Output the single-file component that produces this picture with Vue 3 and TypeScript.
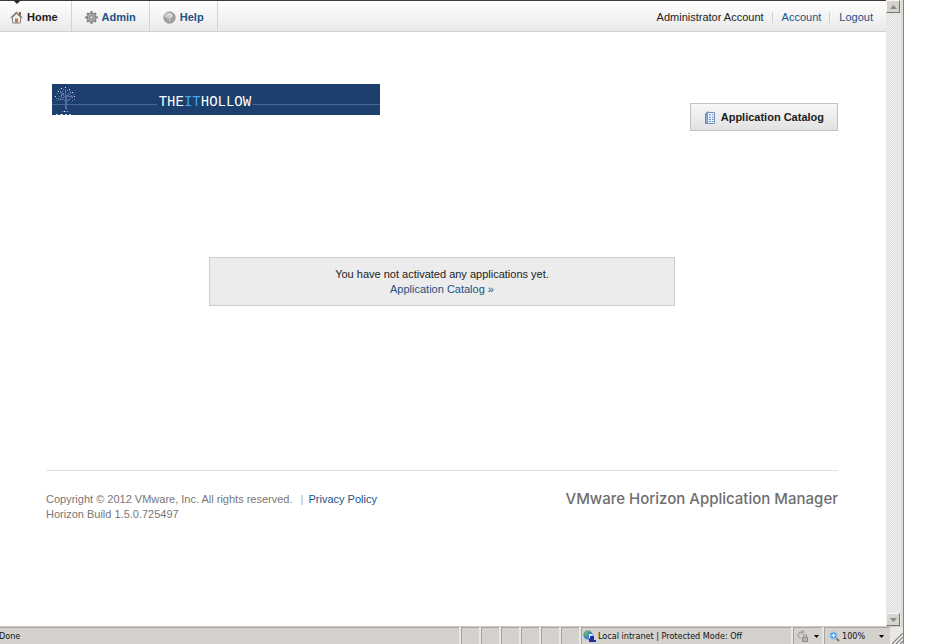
<script setup lang="ts">
interface NavItem {
  id: string
  label: string
  active: boolean
}

const navItems: NavItem[] = [
  { id: 'home', label: 'Home', active: true },
  { id: 'admin', label: 'Admin', active: false },
  { id: 'help', label: 'Help', active: false },
]

const emptyPanes: number[] = [1, 2, 3, 4, 5, 6]
const gearTeeth: number[] = [0, 45, 90, 135, 180, 225, 270, 315]

// Light pixels of the tree in the banner: [x, y]
const treeStars: [number, number][] = [
  [9, 4], [13, 3], [17, 5], [6, 7], [20, 8], [3, 12], [22, 12], [12, 27],
]
const treeLeaves: [number, number][] = [
  [7, 5], [11, 5], [15, 6], [18, 8], [5, 9], [8, 8], [21, 10], [4, 14], [7, 12], [9, 11], [18, 12],
  [20, 13], [16, 9], [13, 7], [6, 14], [22, 15], [8, 15], [17, 15], [10, 7], [15, 11], [11, 13],
  [5, 16], [20, 16], [11, 9],
]
</script>

<template>
  <div class="window">
    <div class="viewport">
      <div class="page">
        <header class="topbar">
          <nav class="nav" aria-label="Main">
            <a
              v-for="item in navItems"
              :key="item.id"
              href="#"
              class="nav-item"
              :class="{ active: item.active }"
            >
              <svg v-if="item.id === 'home'" class="icon" viewBox="0 0 13 13" aria-hidden="true">
                <path d="M9 1h2v4H9z" fill="#a0604a" />
                <path d="M2.5 6.5L6.5 2.5l4 4v5.5h-8z" fill="#f1efed" stroke="#8b8683" />
                <path d="M.8 7L6.5 1.3 12.2 7" fill="none" stroke="#8d8782" stroke-width="1.4" />
                <path d="M5 7.5h3V12H5z" fill="#b77b58" />
              </svg>
              <svg v-else-if="item.id === 'admin'" class="icon" viewBox="0 0 13 13" aria-hidden="true">
                <path
                  v-for="angle in gearTeeth"
                  :key="angle"
                  d="M5.300 .2h2.400v3h-2.400z"
                  fill="#858585"
                  :transform="`rotate(${angle} 6.5 6.5)`"
                />
                <circle cx="6.5" cy="6.5" r="4.2" fill="#b4b4b4" stroke="#7d7d7d" />
                <circle cx="6.5" cy="6.5" r="1.8" fill="#e2e2e2" stroke="#696969" />
              </svg>
              <svg v-else class="icon" viewBox="0 0 13 13" aria-hidden="true">
                <circle cx="6.5" cy="6.5" r="5.6" fill="#a3a3a3" stroke="#8b8b8b" />
                <ellipse cx="5.5" cy="4.5" rx="4" ry="3" fill="#c9c9c9" />
                <path
                  d="M4.8 5c0-2.3 3.7-2.2 3.7 0 0 1.4-1.8 1.3-1.8 2.7M6.7 9v1.2"
                  fill="none"
                  stroke="#f2f2f2"
                />
              </svg>
              <span>{{ item.label }}</span>
            </a>
          </nav>
          <div class="account">
            <span>Administrator Account</span>
            <a href="#">Account</a>
            <a href="#">Logout</a>
          </div>
        </header>

        <main class="content">
          <div class="heading">
            <div class="banner">
              <svg class="tree" viewBox="0 0 26 31" aria-hidden="true" shape-rendering="crispEdges">
                <path
                  d="M13 5v20M14 11v15M13 17l-4-4v-4M13 13l-5-6M14 14l4-4V7M14 18l5-4v-3M10 27h7M12 15H6M15 12h6"
                  fill="none"
                  stroke="#5569a3"
                />
                <path d="M4 30h2M8 30h3M13 30h2M17 30h2" stroke="#c6cee4" />
                <rect v-for="[x, y] in treeLeaves" :key="`l${x}-${y}`" :x="x" :y="y" width="1" height="1" fill="#7383b4" />
                <rect v-for="[x, y] in treeStars" :key="`s${x}-${y}`" :x="x" :y="y" width="1" height="1" fill="#dfe8f8" />
              </svg>
              <span class="rule rule-left"></span>
              <span class="banner-name">THE<em>IT</em>HOLLOW</span>
              <span class="rule rule-right"></span>
            </div>
            <button type="button" class="catalog">
              <svg class="catalog-icon" viewBox="0 0 12 13" aria-hidden="true">
                <path d="M1.5 2.5l3-1.8v11.8h-3z" fill="#8eabd5" stroke="#6886b5" />
                <path d="M3.5 1.5h7v11h-7z" fill="#eef4fc" stroke="#7592bf" />
                <path d="M5 4h2M8 4h1.5M5 6.5h2M8 6.5h1.5M5 8.5h2M8 8.5h1.5M5 10.5h2M8 10.5h1.5" stroke="#6689bd" />
              </svg>
              <span>Application Catalog</span>
            </button>
          </div>

          <section class="empty">
            <p>You have not activated any applications yet.</p>
            <a href="#">Application Catalog »</a>
          </section>

          <footer class="footer">
            <div class="legal">
              <p>
                Copyright © 2012 VMware, Inc. All rights reserved.
                <span class="bar">|</span>
                <a href="#">Privacy Policy</a>
              </p>
              <p>Horizon Build 1.5.0.725497</p>
            </div>
            <div class="product">VMware Horizon Application Manager</div>
          </footer>
        </main>
      </div>

      <div class="scrollbar">
        <button type="button" class="scroll-button" aria-label="Scroll up">
          <svg viewBox="0 0 7 4" aria-hidden="true"><path d="M0 4l3.5-4L7 4z" fill="#888" /></svg>
        </button>
        <button type="button" class="scroll-button" aria-label="Scroll down">
          <svg viewBox="0 0 7 4" aria-hidden="true"><path d="M0 0l3.5 4L7 0z" fill="#888" /></svg>
        </button>
      </div>
    </div>

    <div class="statusbar">
      <span class="pane done">Done</span>
      <span v-for="pane in emptyPanes" :key="pane" class="pane small"></span>
      <span class="pane zone">
        <svg class="zone-icon" viewBox="0 0 13 12" aria-hidden="true">
          <circle cx="5" cy="5" r="4.6" fill="#3c86c8" />
          <path d="M2 2c2-2 4-1 4 0S4 3 4.500 5 2 6 1 4z" fill="#68b75c" />
          <path d="M6 4h3v4H6z" fill="#d4ecfa" />
          <path d="M7 6h4v4h2v2H6V9h1z" fill="#1f2fa4" />
        </svg>
        Local intranet | Protected Mode: Off
      </span>
      <button type="button" class="pane privacy" aria-label="Privacy settings">
        <svg class="lock-icon" viewBox="0 0 12 12" aria-hidden="true">
          <path d="M1 6c0-3 2-4 5-4M4 0l3 2-3 2M1 6l3 3" fill="none" stroke="#aaa" stroke-width="1.300" />
          <path d="M5.500 7.500h5v4h-5z" fill="#b8b8b8" stroke="#888" />
          <path d="M6.500 7V5.500q1.500-2 3 0V7" fill="none" stroke="#888" />
        </svg>
        <svg class="caret" viewBox="0 0 5 3" aria-hidden="true"><path d="M0 0h5L2.500 3z" /></svg>
      </button>
      <button type="button" class="pane zoom">
        <svg class="zoom-icon" viewBox="0 0 11 11" aria-hidden="true">
          <path d="M6.500 6.500l3.500 3.500" stroke="#9b6b46" stroke-width="2" />
          <circle cx="4.500" cy="4.500" r="3.700" fill="#4b9ee8" stroke="#a6cdef" />
          <path d="M4.500 2.500v4M2.500 4.500h4" stroke="#fff" stroke-width="1.200" />
        </svg>
        <span>100%</span>
        <svg class="caret" viewBox="0 0 5 3" aria-hidden="true"><path d="M0 0h5L2.500 3z" /></svg>
      </button>
      <svg class="grip" viewBox="0 0 11 11" aria-hidden="true">
        <path d="M0 11L11 0M4 11l7-7M8 11l3-3" stroke="#8c8a84" stroke-width="1.300" />
        <path d="M2 11l9-9M6 11l5-5" stroke="#fff" />
      </svg>
    </div>
  </div>
</template>

<style>
body {
  background: #fff;
}
</style>

<style scoped>
.window {
  display: flex;
  flex-direction: column;
  min-height: 100vh;
  box-sizing: border-box;
  margin-right: 32px;
  border-right: 1px solid #858585;
  font-family: "Liberation Sans", Arial, sans-serif;
  font-size: 11px;
  line-height: 15px;
  color: #222;
  overflow: hidden;
}

a {
  color: #1c5285;
  text-decoration: none;
}

p {
  margin: 0;
}

button {
  font: inherit;
  color: inherit;
}

.viewport {
  flex: 1;
  display: flex;
  border-right: 2px solid #dedbd6;
}

.page {
  flex: 1;
  display: flex;
  flex-direction: column;
}

.topbar {
  display: flex;
  justify-content: space-between;
  height: 32px;
  box-sizing: border-box;
  border-top: 1px solid #3f3b40;
  border-bottom: 1px solid #d2d2d2;
  background: linear-gradient(#fff, #e9e9e9);
}

.nav {
  display: flex;
}

.nav-item {
  position: relative;
  display: flex;
  align-items: center;
  gap: 4px;
  padding: 2px 13px 0;
  border-right: 1px solid #d4d4d4;
  font-weight: bold;
}

.nav-item.active {
  padding-left: 10px;
  color: #1c1c1c;
}

.nav-item.active::before {
  content: "";
  position: absolute;
  top: -1px;
  left: 13px;
  border: 4px solid transparent;
  border-top-color: #2b272b;
  border-bottom: 0;
}

.icon {
  width: 13px;
  height: 13px;
}

.account {
  display: flex;
  align-items: center;
  padding: 2px 13px 0 0;
}

.account a {
  margin-left: 8px;
  padding-left: 9px;
  line-height: 11px;
  border-left: 1px solid #d0d0d0;
}

.content {
  padding: 52px 48px 0 46px;
}

.heading {
  display: flex;
  justify-content: space-between;
  align-items: flex-start;
  padding-left: 6px;
}

.banner {
  display: flex;
  align-items: center;
  flex: 0 1 328px;
  height: 31px;
  background: #1c3f6e;
  position: relative;
}

.tree {
  position: absolute;
  left: 0;
  top: 0;
  width: 26px;
  height: 31px;
}

.rule {
  height: 1px;
  margin-top: 10px;
  background: #4c639b;
}

.rule-left {
  flex: 104;
}

.rule-right {
  flex: 126;
}

.banner-name {
  padding: 6px 2px 0;
  font-family: "Liberation Mono", monospace;
  font-size: 14px;
  line-height: 15px;
  color: #fff;
}

.banner-name em {
  font-style: normal;
  color: #45a5e8;
}

.catalog {
  display: flex;
  align-items: center;
  gap: 5px;
  height: 28px;
  margin-top: 19px;
  padding: 0 13px;
  border: 1px solid #c2c2c2;
  border-radius: 0;
  background: linear-gradient(#f7f7f7, #e2e2e2);
  font-weight: bold;
  color: #1c1c1c;
}

.catalog-icon {
  width: 12px;
  height: 13px;
}

.empty {
  width: 60%;
  max-width: 466px;
  box-sizing: border-box;
  margin: 126px auto 0;
  padding: 9px 12px 8px;
  border: 1px solid #cdcdcd;
  background: #ececec;
  text-align: center;
}

.footer {
  display: flex;
  justify-content: space-between;
  align-items: flex-start;
  margin-top: 164px;
  padding-top: 21px;
  border-top: 1px solid #dedede;
  color: #777;
}

.bar {
  margin: 0 5px;
  color: #aaa;
}

.product {
  font-family: Inter, sans-serif;
  font-size: 15px;
  font-weight: 500;
  line-height: 14px;
  color: #6e6e6e;
}

.scrollbar {
  display: flex;
  flex-direction: column;
  justify-content: space-between;
  width: 15px;
  background: repeating-conic-gradient(#e0deda 0 25%, #f1f0ee 0 50%) 0 0 / 2px 2px;
}

.scroll-button {
  display: flex;
  align-items: center;
  justify-content: center;
  width: 14px;
  height: 13px;
  padding: 0;
  border: 1px solid;
  border-color: #f5f4f2 #77746f #77746f #f5f4f2;
  background: #d6d3ce;
}

.scroll-button svg {
  width: 7px;
  height: 4px;
}

.statusbar {
  display: flex;
  height: 18px;
  gap: 2px;
  box-sizing: border-box;
  border-top: 1px solid #cfccc6;
  background: #e9e7e3;
  font-family: "DejaVu Sans Condensed", "DejaVu Sans", sans-serif;
  font-size: 9px;
  line-height: 16px;
  color: #111;
}

.pane {
  display: flex;
  align-items: center;
  box-sizing: border-box;
  margin: 0;
  padding: 0;
  border: 0 solid #a7a49e;
  border-top-width: 1px;
  border-left-width: 1px;
  border-radius: 0;
  background: #d5d2cd;
  white-space: nowrap;
}

.done {
  flex: 1;
  border-left-width: 0;
  text-indent: -1px;
}

.small {
  width: 18px;
}

.zone {
  width: 210px;
  gap: 2px;
  padding-left: 1px;
}

.zone-icon {
  width: 13px;
  height: 12px;
}

.privacy {
  width: 29px;
  gap: 5px;
  padding-left: 3px;
}

.lock-icon {
  width: 12px;
  height: 12px;
}

.zoom {
  width: 66px;
  padding-left: 4px;
}

.zoom-icon {
  width: 11px;
  height: 11px;
}

.zoom span {
  flex: 1;
  padding-left: 2px;
  text-align: left;
}

.zoom .caret {
  margin-right: 6px;
}

.caret {
  width: 5px;
  height: 3px;
}

.grip {
  align-self: flex-end;
  width: 11px;
  height: 11px;
}
</style>
